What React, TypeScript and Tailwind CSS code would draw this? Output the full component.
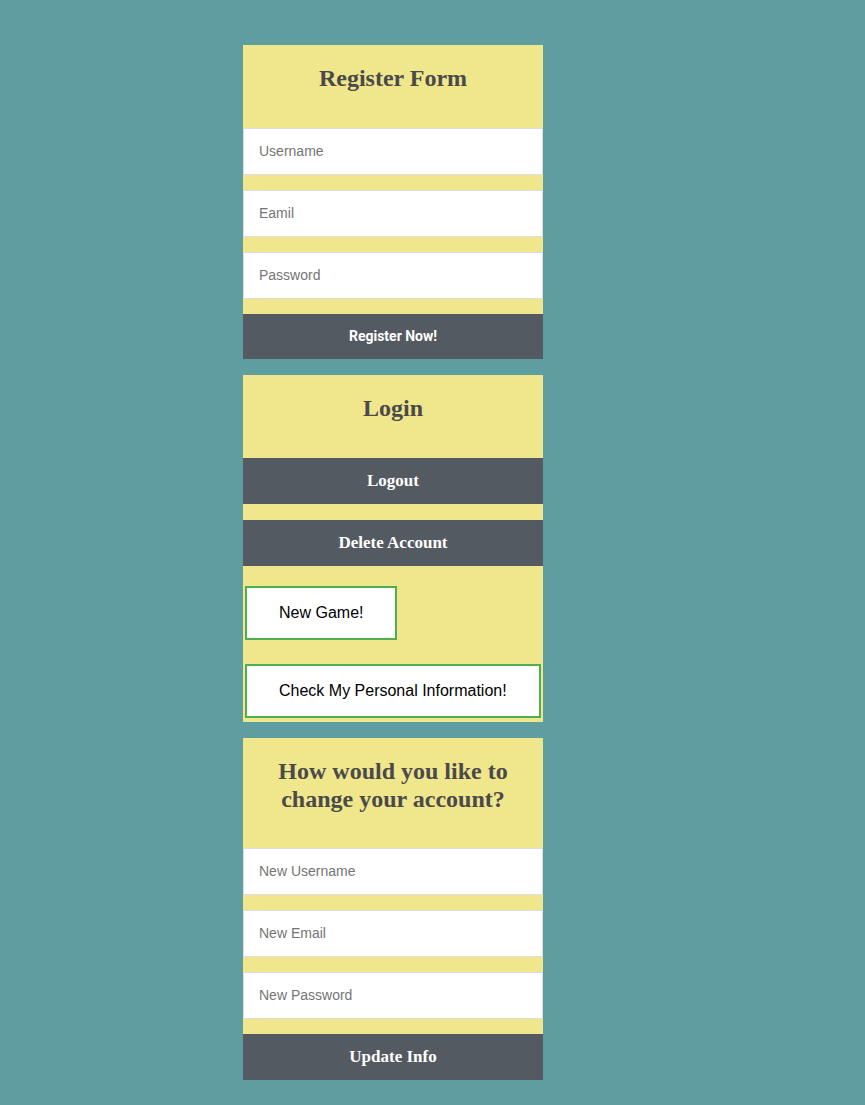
import React from "react";

const serif = "font-['Liberation_Serif','Times_New_Roman',serif]";
const sans = "font-['Liberation_Sans',Arial,sans-serif]";

function Heading({ children, tight }: { children: React.ReactNode; tight?: boolean }) {
  return (
    <h2
      className={`${serif} text-center text-[24px] font-bold leading-[28px] text-[#4a4a4a] pt-[19px] ${
        tight ? "pb-[35px]" : "pb-[36px]"
      } px-6`}
    >
      {children}
    </h2>
  );
}

function Field({ placeholder, type = "text" }: { placeholder: string; type?: string }) {
  return (
    <input
      type={type}
      placeholder={placeholder}
      className={`${sans} block w-full h-[47px] bg-white border border-[#dddddd] px-[15px] pb-[2px] text-[14px] text-[#333] placeholder:text-[#757575] outline-none`}
    />
  );
}

function DarkButton({ label, font }: { label: string; font: string }) {
  return (
    <button
      type="button"
      className={`${font} block w-full bg-[#545a61] text-white font-bold`}
    >
      {label}
    </button>
  );
}

export default function App() {
  return (
    <div className="min-h-[1105px] w-full bg-[#5f9ea0] pt-[45px]">
      <div className="ml-[243px] w-[300px] flex flex-col">
        {/* Register */}
        <form className="bg-[#f0e68c] flex flex-col">
          <Heading>Register Form</Heading>
          <div className="flex flex-col gap-[15px]">
            <Field placeholder="Username" />
            <Field placeholder="Eamil" type="email" />
            <Field placeholder="Password" type="password" />
            <DarkButton label="Register Now!" font="font-['Roboto',Arial,sans-serif] text-[14px] h-[45px]" />
          </div>
        </form>

        {/* Login */}
        <div className="mt-4 bg-[#f0e68c] flex flex-col">
          <Heading>Login</Heading>
          <DarkButton label="Logout" font={`${serif} text-[17px] h-[46px]`} />
          <div className="mt-4">
            <DarkButton label="Delete Account" font={`${serif} text-[17px] h-[46px]`} />
          </div>
          <div className="pt-5 px-[2px] pb-[4px] flex flex-col items-start gap-6">
            <button
              type="button"
              className={`${sans} bg-white border-2 border-[#4caf50] px-8 h-[54px] text-[16px] text-black`}
            >
              New Game!
            </button>
            <button
              type="button"
              className={`${sans} bg-white border-2 border-[#4caf50] px-8 h-[54px] text-[16px] text-black`}
            >
              Check My Personal Information!
            </button>
          </div>
        </div>

        {/* Update */}
        <form className="mt-[16px] bg-[#f0e68c] flex flex-col">
          <Heading tight>How would you like to change your account?</Heading>
          <div className="flex flex-col gap-[15px]">
            <Field placeholder="New Username" />
            <Field placeholder="New Email" type="email" />
            <Field placeholder="New Password" type="password" />
            <DarkButton label="Update Info" font={`${serif} text-[17px] h-[46px]`} />
          </div>
        </form>
      </div>
    </div>
  );
}
